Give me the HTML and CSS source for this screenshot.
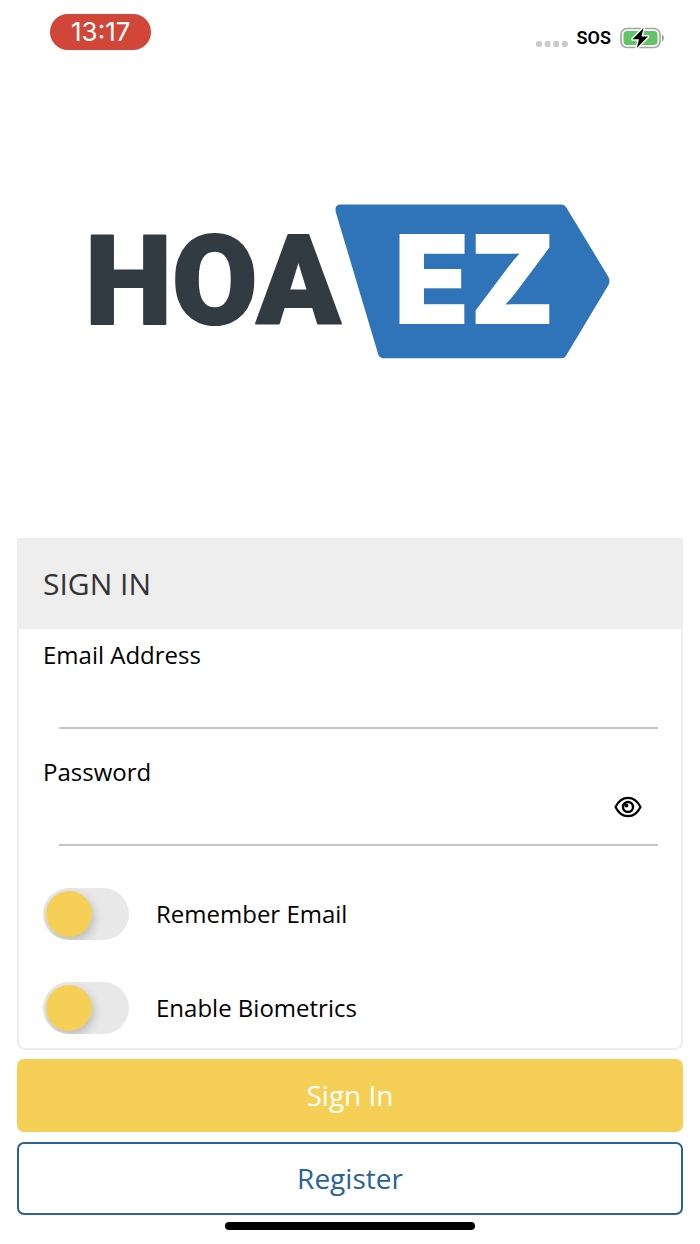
FILE: index.html
```html
<!DOCTYPE html>
<html lang="en">
<head>
    <meta charset="UTF-8">
    <meta name="viewport" content="width=device-width, initial-scale=1.0">
    <title>HOA EZ - Sign In</title>
    <link rel="stylesheet" href="styles.css">
</head>
<body>
    <header class="status-bar">
        <span class="clock">13:17</span>
        <div class="status-icons">
            <svg class="signal" width="32" height="6" viewBox="0 0 32 6" fill="#cbcbcb" aria-hidden="true">
                <rect x="0" y="0" width="6" height="6" rx="2"/>
                <rect x="8.6" y="0" width="6" height="6" rx="2"/>
                <rect x="17.2" y="0" width="6" height="6" rx="2"/>
                <rect x="25.8" y="0" width="6" height="6" rx="2"/>
            </svg>
            <span class="sos">SOS</span>
            <svg class="battery" width="45" height="24" viewBox="0 0 45 24" aria-hidden="true">
                <rect x="1" y="2.5" width="39" height="19" rx="6" fill="#fff" stroke="#a3a3a3" stroke-width="1.6"/>
                <rect x="3.5" y="5" width="34" height="14" rx="3.5" fill="#62c466"/>
                <path d="M42 8.5c2.6 1.2 2.6 5.8 0 7z" fill="#a3a3a3"/>
                <path d="M23.5 2 12.5 13.2h6.5L16.8 22 28 10.6h-6.5z" fill="#000" stroke="#fff" stroke-width="3" stroke-linejoin="round" paint-order="stroke"/>
            </svg>
        </div>
    </header>

    <main class="container">
        <div class="logo-section">
            <svg class="logo" viewBox="0 0 520 155" role="img" aria-label="HOA EZ">
                <path d="M251 .5H472q3 0 4.5 2.5L519 73q2 4 0 8L476.5 152q-1.5 2.5-4.5 2.5H294q-4 0-5.5-4L246 8Q244.5.5 251 .5z" fill="#2f74b8"/>
                <text class="logo-hoa" x="-5" y="120">HOA</text>
                <text class="logo-ez" x="304" y="120">EZ</text>
            </svg>
        </div>

        <form class="login-form" onsubmit="return false;">
            <section class="card">
                <h1>SIGN IN</h1>
                <div class="card-body">
                    <label for="email">Email Address</label>
                    <div class="field">
                        <input type="email" id="email" autocomplete="email">
                    </div>

                    <label for="password">Password</label>
                    <div class="field">
                        <input type="password" id="password" autocomplete="current-password">
                        <button type="button" class="show-password" aria-label="Show password" onclick="togglePassword()">
                            <svg width="28" height="22" viewBox="0 0 28 22" fill="none" stroke="#000" aria-hidden="true">
                                <path d="M1.5 11C4.5 4.8 9 1.8 14 1.8S23.5 4.8 26.5 11C23.5 17.2 19 20.2 14 20.2S4.5 17.2 1.5 11z" stroke-width="2.2" stroke-linejoin="round"/>
                                <circle cx="14" cy="11" r="5" stroke-width="2.4"/>
                                <circle cx="12.4" cy="9.4" r="2" fill="#000" stroke="none"/>
                            </svg>
                        </button>
                    </div>

                    <div class="switch-row">
                        <input type="checkbox" class="switch" id="rememberEmail">
                        <label for="rememberEmail">Remember Email</label>
                    </div>
                    <div class="switch-row">
                        <input type="checkbox" class="switch" id="enableBiometrics">
                        <label for="enableBiometrics">Enable Biometrics</label>
                    </div>
                </div>
            </section>

            <button type="submit" class="btn btn-primary">Sign In</button>
            <button type="button" class="btn btn-outline">Register</button>
        </form>
    </main>

    <div class="home-indicator"></div>

    <script>
        function togglePassword() {
            const password = document.getElementById('password');
            password.type = password.type === 'password' ? 'text' : 'password';
        }
    </script>
</body>
</html>
```
FILE: styles.css
```css
* {
    box-sizing: border-box;
}

body {
    margin: 0;
    font-family: "Open Sans", sans-serif;
    font-size: 24px;
    line-height: 32px;
    color: #000;
    background: #fff;
}

/* Status bar */
.status-bar {
    display: flex;
    justify-content: space-between;
    align-items: flex-start;
    padding: 14px 35px 0 50px;
    height: 64px;
}

.clock {
    padding: 0 21px;
    border-radius: 18px;
    background: #d14638;
    color: #fff;
    font-family: Inter, sans-serif;
    font-size: 26px;
    line-height: 36px;
}

.status-icons {
    display: flex;
    align-items: center;
    gap: 9px;
    padding-top: 12px;
}

.signal {
    margin-top: 12px;
}

.sos {
    font-family: Roboto, sans-serif;
    font-size: 18px;
    font-weight: 600;
    line-height: 24px;
}

/* Logo */
.container {
    padding: 0 17px;
}

.logo-section {
    display: flex;
    justify-content: center;
    padding: 140px 0 179px;
}

.logo {
    width: 78%;
    overflow: visible;
}

.logo-hoa {
    fill: #323a42;
    stroke: #323a42;
    stroke-width: 2px;
    stroke-linejoin: round;
    font-family: Roboto, sans-serif;
    font-size: 124px;
    font-weight: 900;
}

.logo-ez {
    fill: #fff;
    font-family: Inter, sans-serif;
    font-size: 124px;
    font-weight: 900;
}

/* Sign in card */
.login-form {
    display: flex;
    flex-direction: column;
}

.card {
    margin-bottom: 9px;
    border: 2px solid #eee;
    border-top: 0;
    border-radius: 0 0 8px 8px;
}

h1 {
    margin: 0;
    padding: 26px 24px 25px;
    background: #eee;
    color: #333;
    font-size: 30px;
    font-weight: 400;
    line-height: 40px;
}

.card-body {
    padding: 10px 23px 14px 24px;
}

.card-body label {
    display: block;
}

.field {
    display: flex;
    height: 58px;
    margin: 0 0 27px 16px;
    border-bottom: 2px solid #c4c4c4;
}

.field input {
    flex: 1;
    min-width: 0;
    padding: 0 16px;
    border: 0;
    outline: 0;
    background: none;
    font: inherit;
}

.show-password {
    display: flex;
    padding: 8px 16px;
    border: 0;
    background: none;
    cursor: pointer;
}

.switch-row {
    display: flex;
    align-items: center;
    gap: 27px;
    margin-top: 42px;
}

.switch {
    appearance: none;
    width: 86px;
    height: 52px;
    margin: 0;
    padding: 3px;
    border-radius: 26px;
    background: #e8e8e8;
    overflow: hidden;
    cursor: pointer;
}

.switch::before {
    content: "";
    display: block;
    width: 46px;
    height: 46px;
    border-radius: 50%;
    background: #f6d056;
    box-shadow: 2px 4px 10px rgba(0, 0, 0, 0.2);
}

.switch:checked::before {
    margin-left: auto;
}

/* Buttons */
.btn {
    height: 73px;
    border: 2px solid #f6d056;
    border-radius: 7px;
    font-family: inherit;
    font-size: 28px;
    cursor: pointer;
}

.btn-primary {
    margin-bottom: 10px;
    background: #f6d056;
    color: #fff;
}

.btn-outline {
    border-color: #286496;
    background: #fff;
    color: #286496;
}

.home-indicator {
    width: 250px;
    height: 8px;
    margin: 7px auto 0;
    border-radius: 4px;
    background: #000;
}
```
